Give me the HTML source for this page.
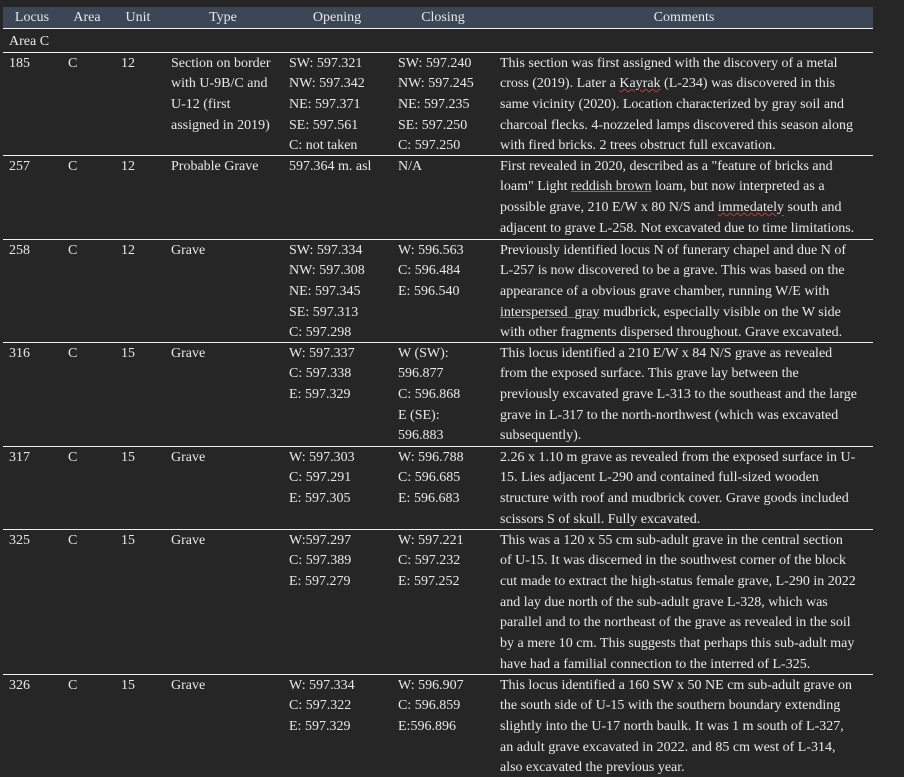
<!DOCTYPE html>
<html><head><meta charset="utf-8"><style>
html,body{margin:0;padding:0;background:#262626;width:904px;height:777px;overflow:hidden}
body{position:relative;font-family:"Liberation Serif",serif;font-size:14px;color:#e8e8e8;line-height:20.7px}
.hdr{position:absolute;left:3px;top:7px;width:870px;height:21px;background:#3b4656}
.hl{position:absolute;left:3px;width:870px;height:1px;background:#f0f0f0}
.t{position:absolute;white-space:nowrap;margin-top:1.5px}
.h{position:absolute;top:7px;line-height:20px;text-align:center;white-space:nowrap;margin-top:1px}
.sp{text-decoration:underline wavy #c33;text-decoration-thickness:1px}
.gr{text-decoration:underline #4a7bd0;text-decoration-thickness:1px}
</style></head><body>
<div class="hdr"></div>
<div class="h" style="left:3px;width:58px">Locus</div>
<div class="h" style="left:61px;width:52px">Area</div>
<div class="h" style="left:113px;width:50px">Unit</div>
<div class="h" style="left:163px;width:120px">Type</div>
<div class="h" style="left:283px;width:108px">Opening</div>
<div class="h" style="left:391px;width:104px">Closing</div>
<div class="h" style="left:495px;width:378px">Comments</div>
<div class="hl" style="top:28px"></div>
<div class="t" style="left:9px;top:30px">Area C</div>
<div class="hl" style="top:52px"></div>

<div class="t" style="left:9px;top:52px">185</div><div class="t" style="left:68px;top:52px">C</div><div class="t" style="left:121px;top:52px">12</div>
<div class="t" style="left:171px;top:52px">Section on border<br>with U-9B/C and<br>U-12 (first<br>assigned in 2019)</div>
<div class="t" style="left:289px;top:52px">SW: 597.321<br>NW: 597.342<br>NE: 597.371<br>SE: 597.561<br>C: not taken</div>
<div class="t" style="left:398px;top:52px">SW: 597.240<br>NW: 597.245<br>NE: 597.235<br>SE: 597.250<br>C: 597.250</div>
<div class="t" style="left:500px;top:52px">This section was first assigned with the discovery of a metal<br>cross (2019). Later a <span class="sp">Kayrak</span> (L-234) was discovered in this<br>same vicinity (2020). Location characterized by gray soil and<br>charcoal flecks. 4-nozzeled lamps discovered this season along<br>with fired bricks. 2 trees obstruct full excavation.</div>
<div class="hl" style="top:155px"></div>

<div class="t" style="left:9px;top:155px">257</div><div class="t" style="left:68px;top:155px">C</div><div class="t" style="left:121px;top:155px">12</div>
<div class="t" style="left:171px;top:155px">Probable Grave</div>
<div class="t" style="left:289px;top:155px">597.364 m. asl</div>
<div class="t" style="left:398px;top:155px">N/A</div>
<div class="t" style="left:500px;top:155px">First revealed in 2020, described as a "feature of bricks and<br>loam" Light <span class="gr">reddish brown</span> loam, but now interpreted as a<br>possible grave, 210 E/W x 80 N/S and <span class="sp">immedately</span> south and<br>adjacent to grave L-258. Not excavated due to time limitations.</div>
<div class="hl" style="top:239px"></div>

<div class="t" style="left:9px;top:239px">258</div><div class="t" style="left:68px;top:239px">C</div><div class="t" style="left:121px;top:239px">12</div>
<div class="t" style="left:171px;top:239px">Grave</div>
<div class="t" style="left:289px;top:239px">SW: 597.334<br>NW: 597.308<br>NE: 597.345<br>SE: 597.313<br>C: 597.298</div>
<div class="t" style="left:398px;top:239px">W: 596.563<br>C: 596.484<br>E: 596.540</div>
<div class="t" style="left:500px;top:239px">Previously identified locus N of funerary chapel and due N of<br>L-257 is now discovered to be a grave. This was based on the<br>appearance of a obvious grave chamber, running W/E with<br><span class="gr">interspersed&nbsp; gray</span> mudbrick, especially visible on the W side<br>with other fragments dispersed throughout. Grave excavated.</div>
<div class="hl" style="top:342px"></div>

<div class="t" style="left:9px;top:342px">316</div><div class="t" style="left:68px;top:342px">C</div><div class="t" style="left:121px;top:342px">15</div>
<div class="t" style="left:171px;top:342px">Grave</div>
<div class="t" style="left:289px;top:342px">W: 597.337<br>C: 597.338<br>E: 597.329</div>
<div class="t" style="left:398px;top:342px">W (SW):<br>596.877<br>C: 596.868<br>E (SE):<br>596.883</div>
<div class="t" style="left:500px;top:342px">This locus identified a 210 E/W x 84 N/S grave as revealed<br>from the exposed surface. This grave lay between the<br>previously excavated grave L-313 to the southeast and the large<br>grave in L-317 to the north-northwest (which was excavated<br>subsequently).</div>
<div class="hl" style="top:446px"></div>

<div class="t" style="left:9px;top:446px">317</div><div class="t" style="left:68px;top:446px">C</div><div class="t" style="left:121px;top:446px">15</div>
<div class="t" style="left:171px;top:446px">Grave</div>
<div class="t" style="left:289px;top:446px">W: 597.303<br>C: 597.291<br>E: 597.305</div>
<div class="t" style="left:398px;top:446px">W: 596.788<br>C: 596.685<br>E: 596.683</div>
<div class="t" style="left:500px;top:446px">2.26 x 1.10 m grave as revealed from the exposed surface in U-<br>15. Lies adjacent L-290 and contained full-sized wooden<br>structure with roof and mudbrick cover. Grave goods included<br>scissors S of skull. Fully excavated.</div>
<div class="hl" style="top:529px"></div>

<div class="t" style="left:9px;top:529px">325</div><div class="t" style="left:68px;top:529px">C</div><div class="t" style="left:121px;top:529px">15</div>
<div class="t" style="left:171px;top:529px">Grave</div>
<div class="t" style="left:289px;top:529px">W:597.297<br>C: 597.389<br>E: 597.279</div>
<div class="t" style="left:398px;top:529px">W: 597.221<br>C: 597.232<br>E: 597.252</div>
<div class="t" style="left:500px;top:529px">This was a 120 x 55 cm sub-adult grave in the central section<br>of U-15. It was discerned in the southwest corner of the block<br>cut made to extract the high-status female grave, L-290 in 2022<br>and lay due north of the sub-adult grave L-328, which was<br>parallel and to the northeast of the grave as revealed in the soil<br>by a mere 10 cm. This suggests that perhaps this sub-adult may<br>have had a familial connection to the interred of L-325.</div>
<div class="hl" style="top:674px"></div>

<div class="t" style="left:9px;top:674px">326</div><div class="t" style="left:68px;top:674px">C</div><div class="t" style="left:121px;top:674px">15</div>
<div class="t" style="left:171px;top:674px">Grave</div>
<div class="t" style="left:289px;top:674px">W: 597.334<br>C: 597.322<br>E: 597.329</div>
<div class="t" style="left:398px;top:674px">W: 596.907<br>C: 596.859<br>E:596.896</div>
<div class="t" style="left:500px;top:674px">This locus identified a 160 SW x 50 NE cm sub-adult grave on<br>the south side of U-15 with the southern boundary extending<br>slightly into the U-17 north baulk. It was 1 m south of L-327,<br>an adult grave excavated in 2022. and 85 cm west of L-314,<br>also excavated the previous year.</div>
</body></html>
